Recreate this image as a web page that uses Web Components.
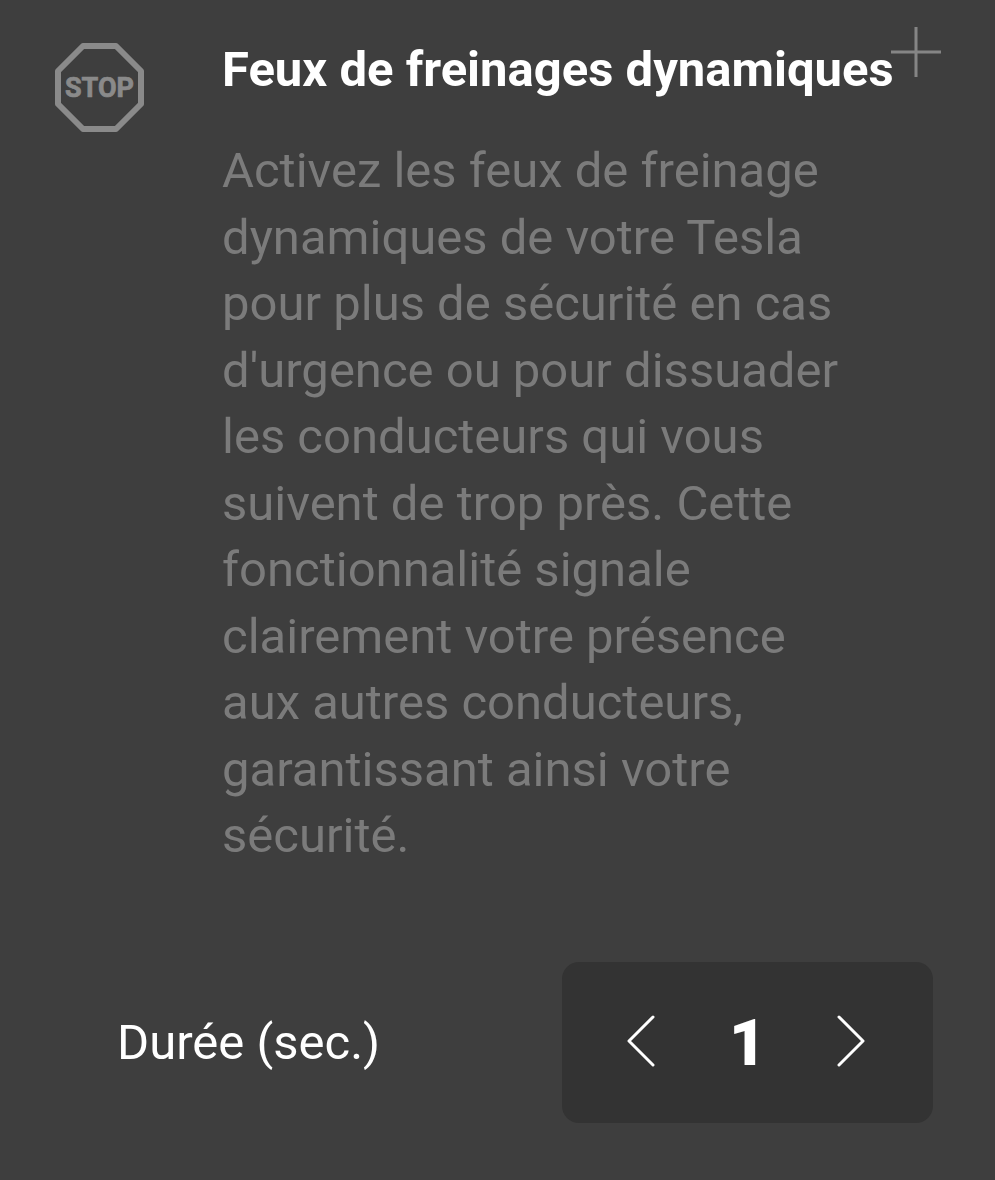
<!DOCTYPE html>
<html lang="fr"><head><meta charset="utf-8"><style>
html,body{margin:0;padding:0;background:#3e3e3e;font-family:Roboto,sans-serif}
</style></head><body>
<feature-card>
<svg slot="icon" width="92" height="92" viewBox="0 0 92 92"><polygon points="29,4 62,4 87,29 87,62 62,87 29,87 4,62 4,29" fill="none" stroke="#8a8a8a" stroke-width="6" stroke-linejoin="round"/><text x="45.5" y="55" text-anchor="middle" font-family="Roboto" font-weight="700" font-size="27" fill="#8a8a8a" stroke="#8a8a8a" stroke-width=".7">STOP</text></svg>
<span slot="title">Feux de freinages dynamiques</span>
Activez les feux de freinage dynamiques de votre Tesla pour plus de sécurité en cas d'urgence ou pour dissuader les conducteurs qui vous suivent de trop près. Cette fonctionnalité signale clairement votre présence aux autres conducteurs, garantissant ainsi votre sécurité.
<value-stepper slot="control" label="Durée (sec.)" value="1"></value-stepper>
</feature-card>
<script>
class FeatureCard extends HTMLElement{constructor(){super();this.attachShadow({mode:'open'}).innerHTML=`<style>
:host{display:block;position:relative;width:995px;height:1180px;box-sizing:border-box;background:#3e3e3e;padding:38px 0 0 54px;overflow:hidden}
.top{display:grid;grid-template-columns:168px 620px;align-items:start}
.icon{display:block;padding-top:4px;height:92px}
h2{margin:0;padding-top:1px;font:700 49px/62px Roboto,sans-serif;color:#fff;white-space:nowrap;letter-spacing:0}
p{margin:37px 0 0;font:400 49px/66.5px Roboto,sans-serif;color:#7b7b7b}
.plus{position:absolute;left:891px;top:27px;width:50px;height:50px}
.control{display:block;margin:92px 0 0 63px}
</style><div class="top"><div class="icon"><slot name="icon"></slot></div><div><h2><slot name="title"></slot></h2><p><slot></slot></p></div></div>
<svg class="plus" viewBox="0 0 50 50"><path d="M25 0V50M0 25H50" stroke="#858585" stroke-width="3" fill="none"/></svg>
<div class="control"><slot name="control"></slot></div>`}}
class ValueStepper extends HTMLElement{constructor(){super();this.attachShadow({mode:'open'}).innerHTML=`<style>
:host{display:flex;align-items:center;justify-content:space-between;width:816px;height:161px}
.label{font:400 49px/60px Roboto,sans-serif;color:#fff;margin-top:2px}
.box{box-sizing:border-box;width:371px;height:161px;border-radius:17px;background:#333;display:flex;align-items:center;justify-content:space-between;padding:0 67px 0 64px}
.v{font:900 64px/60px Roboto,sans-serif;color:#fff;margin:3px 0 0 3px}
svg{display:block;width:30px;height:54px;margin-top:-3px}
</style><span class="label"></span><div class="box"><svg viewBox="0 0 30 54"><path d="M27 3 3 27 27 51" fill="none" stroke="#fff" stroke-width="3" stroke-linecap="round" stroke-linejoin="round"/></svg><span class="v"></span><svg viewBox="0 0 30 54"><path d="M3 3 27 27 3 51" fill="none" stroke="#fff" stroke-width="3" stroke-linecap="round" stroke-linejoin="round"/></svg></div>`}
connectedCallback(){this.shadowRoot.querySelector('.label').textContent=this.getAttribute('label');this.shadowRoot.querySelector('.v').textContent=this.getAttribute('value')}}
customElements.define('feature-card',FeatureCard);customElements.define('value-stepper',ValueStepper);
</script></body></html>
